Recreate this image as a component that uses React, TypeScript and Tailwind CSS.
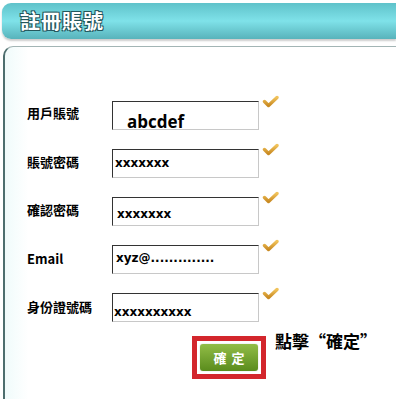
const Check = () => (
  <svg width="17" height="13" viewBox="0 0 17 13" className="shrink-0">
    <defs>
      <linearGradient id="ck" x1="0" y1="0" x2="0" y2="1">
        <stop offset="0" stopColor="#f0c25a" />
        <stop offset="1" stopColor="#c98a22" />
      </linearGradient>
    </defs>
    <path
      d="M2.5 6.5 L6.5 10.5 L15 2.5"
      fill="none"
      stroke="url(#ck)"
      strokeWidth="3.4"
      strokeLinecap="round"
      strokeLinejoin="round"
    />
  </svg>
);

type Row = {
  label: string;
  value: string;
  valueClass: string;
  labelTop: string;
};

const rows: Row[] = [
  {
    label: "用戶賬號",
    value: "abcdef",
    valueClass:
      "pl-[14px] pt-[10px] text-[17px] leading-[20px] font-bold font-['Open_Sans',sans-serif]",
    labelTop: "pt-[4px]",
  },
  {
    label: "賬號密碼",
    value: "xxxxxxx",
    valueClass: "pl-[2px] pt-[6px] text-[12px] font-bold",
    labelTop: "pt-[5px]",
  },
  {
    label: "確認密碼",
    value: "xxxxxxx",
    valueClass: "pl-[4px] pt-[9px] text-[12px] font-bold",
    labelTop: "pt-[5px]",
  },
  {
    label: "Email",
    value: "xyz@..............",
    valueClass: "pl-[3px] pt-[5px] text-[12px] font-bold",
    labelTop: "pt-[6px]",
  },
  {
    label: "身份證號碼",
    value: "xxxxxxxxxx",
    valueClass: "pl-[1px] pt-[11px] text-[12px] font-bold",
    labelTop: "pt-[6px]",
  },
];

export default function App() {
  return (
    <div className="w-[396px] h-[399px] overflow-hidden bg-white font-['Noto_Sans_CJK_TC',sans-serif] text-black">
      {/* Header */}
      <div className="pt-[3px] pl-[2px]">
        <div className="h-[36px] rounded-l-[9px] bg-gradient-to-b from-[#5fc2ca] via-[#7fe2e9] to-[#58b3bb] shadow-[0_2px_2px_rgba(0,0,0,0.2)] flex items-center pl-[18px]">
          <span className="text-[20px] font-bold text-white tracking-[1px] [text-shadow:1px_1px_0_#24575c,-1px_-1px_0_#24575c,1px_-1px_0_#24575c,-1px_1px_0_#24575c]">
            註冊賬號
          </span>
        </div>
      </div>

      {/* Panel */}
      <div className="mt-[7px] ml-[3px] h-[360px] rounded-tl-[10px] border-t border-l-2 border-t-[#a3b5b5] border-l-[#4d6e6e] bg-gradient-to-r from-[#f0fbfb] via-white via-[6%] to-white">
        <div className="pt-[54px] pl-[22px] flex flex-col gap-[20px]">
          {rows.map((r) => (
            <div key={r.label} className="flex items-start h-[28px]">
              <div
                className={`w-[85px] text-[13px] font-bold leading-[15px] ${r.labelTop}`}
              >
                {r.label}
              </div>
              <div className="w-[147px] h-[29px] border border-t-[#333] border-l-[#333] border-r-[#c8c8c8] border-b-[#c8c8c8] bg-white overflow-visible">
                <div
                  className={`font-['DejaVu_Sans',sans-serif] leading-[14px] ${r.valueClass}`}
                >
                  {r.value}
                </div>
              </div>
              <div className="ml-[3px] -mt-[6px]">
                <Check />
              </div>
            </div>
          ))}
        </div>

        {/* Confirm */}
        <div className="flex items-start mt-[15px] pl-[187px]">
          <div className="border-[5px] border-[#d3262c] p-[3px] bg-white">
            <button className="w-[58px] h-[27px] rounded-[3px] bg-gradient-to-b from-[#92bd46] to-[#5a8c1c] text-white text-[13px] font-bold tracking-[5px] pl-[5px] shadow-[0_0_1px_rgba(0,0,0,0.4)]">
              確定
            </button>
          </div>
          <div className="ml-[9px] -mt-[7px] text-[17px] font-bold leading-[24px]">
            點擊“確定”
          </div>
        </div>
      </div>
    </div>
  );
}
